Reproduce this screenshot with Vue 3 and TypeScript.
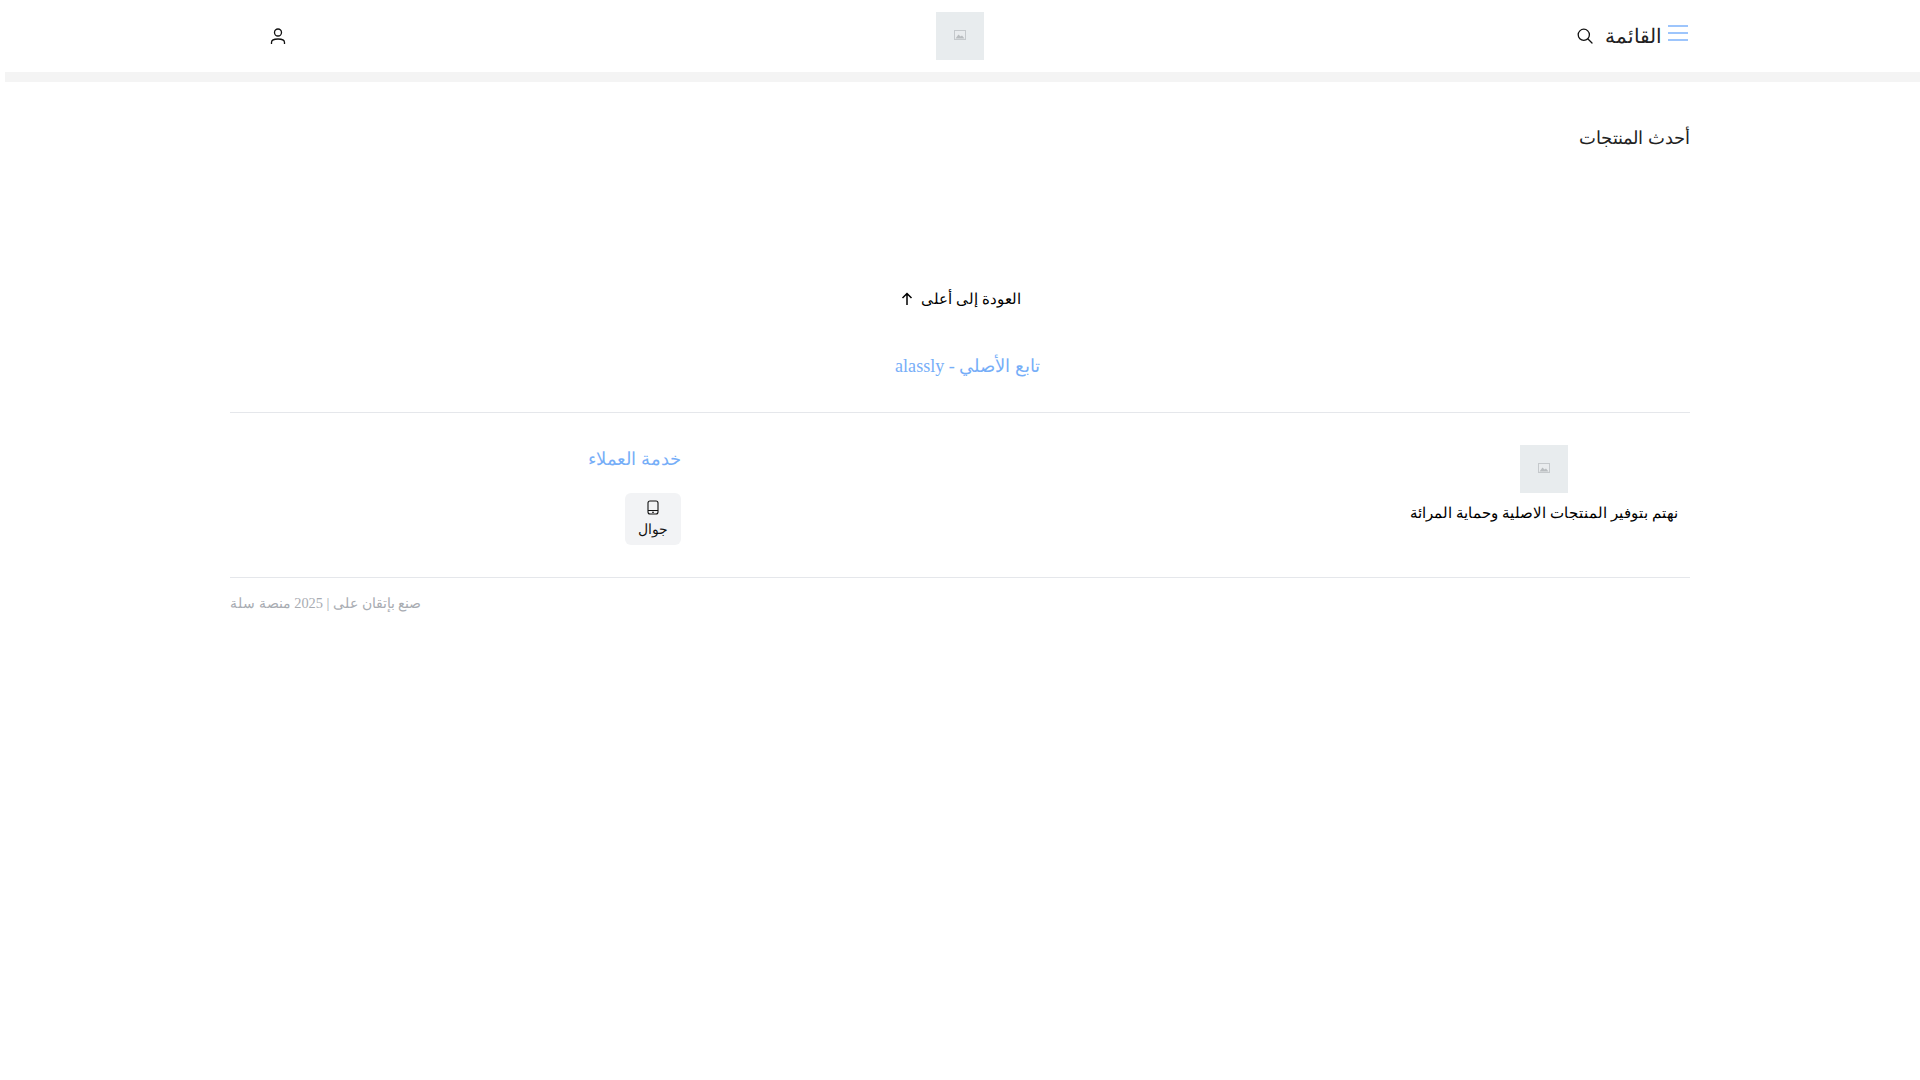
<script setup lang="ts">
const year = 2025
</script>

<template>
  <div class="page" dir="rtl" lang="ar">
    <header class="header">
      <div class="header-inner">
        <div class="header-start">
          <button class="menu-btn">
            <svg class="menu-icon" width="20" height="16" viewBox="0 0 20 16" fill="none" stroke="#7db2fb" stroke-width="1.600"><path d="M0 1h20M0 8h20M0 15h20"/></svg>
            <span class="menu-label">القائمة</span>
          </button>
          <svg class="search" width="16" height="16" viewBox="0 0 16 16" fill="none" stroke="#111" stroke-width="1.300"><circle cx="6.800" cy="6.800" r="5.600"/><path d="M11 11l4 4" stroke-linecap="round"/></svg>
        </div>
        <div class="thumb">
          <svg width="12" height="12" viewBox="0 0 12 12"><rect x="0.500" y="1.500" width="11" height="9" fill="#e9ecee" stroke="#c5c9cc"/><path d="M1.500 9.500l3-4 2 2 1.500-1 2.500 3z" fill="#b9bdc0"/></svg>
        </div>
        <div class="header-end">
          <svg width="16" height="17" viewBox="0 0 16 17" fill="none" stroke="#111" stroke-width="1.300"><circle cx="8" cy="4.500" r="3.500"/><path d="M1.500 16v-1.500c0-2.500 2-3.500 6.500-3.500s6.500 1 6.500 3.500V16"/></svg>
        </div>
      </div>
    </header>
    <div class="band"></div>
    <main class="container">
      <h2 class="latest">أحدث المنتجات</h2>
      <a class="back-top">
        <span>العودة إلى أعلى</span>
        <svg width="16" height="16" viewBox="0 0 16 16" fill="none" stroke="#000" stroke-width="1.500"><path d="M8 14V2.500M3.500 7L8 2.500 12.500 7"/></svg>
      </a>
      <p class="follow">تابع الأصلي - alassly</p>
      <footer class="footer">
        <div class="about">
          <div class="thumb">
            <svg width="12" height="12" viewBox="0 0 12 12"><rect x="0.500" y="1.500" width="11" height="9" fill="#e9ecee" stroke="#c5c9cc"/><path d="M1.500 9.500l3-4 2 2 1.500-1 2.500 3z" fill="#b9bdc0"/></svg>
          </div>
          <p class="about-text">نهتم بتوفير المنتجات الاصلية وحماية المرائة</p>
        </div>
        <div class="service">
          <h3 class="service-title">خدمة العملاء</h3>
          <div class="contact">
            <svg width="12" height="15" viewBox="0 0 12 15" fill="none" stroke="#111" stroke-width="1.100"><rect x="1" y="1" width="10" height="13" rx="2"/><path d="M1 10.500h10M5 12.300h2"/></svg>
            <span>جوال</span>
          </div>
        </div>
      </footer>
      <div class="copyright">صنع بإتقان على | {{ year }} منصة سلة</div>
    </main>
  </div>
</template>

<style scoped>
.page {
  min-height: 1080px;
  background: #fff;
  font-family: "Liberation Serif", serif;
  color: #111;
}
.header { height: 72px; display: flex; justify-content: center; }
.header-inner {
  width: 1460px;
  display: grid;
  grid-template-columns: 1fr auto 1fr;
  align-items: center;
}
.header-start { display: flex; align-items: center; gap: 12px; }
.menu-btn {
  display: flex; align-items: center; gap: 6px;
  border: 0; background: none; padding: 0 2px 0 0;
  font: inherit; color: #222;
}
.menu-icon { margin-top: -6px; }
.menu-label { font-size: 20px; }
.header-end { display: flex; justify-content: flex-end; padding-left: 40px; }
.thumb {
  width: 48px; height: 48px;
  background: #e8ecee;
  display: flex; align-items: center; justify-content: center;
  padding-bottom: 2px;
  box-sizing: border-box;
}
.band { height: 10px; background: #f4f4f4; width: 1915px; }
.container { width: 1460px; margin: 0 auto; }
.latest {
  margin: 0; padding-top: 44px;
  font-size: 18.200px; font-weight: 400; line-height: 24px; color: #222;
}
.back-top {
  display: flex; justify-content: center; align-items: center; gap: 6px;
  margin-top: 139px;
  font-size: 15.300px; line-height: 20px; color: #000;
}
.follow {
  margin: 41px 0 0;
  padding-bottom: 30px;
  border-bottom: 1px solid #e5e7eb;
  text-align: center;
  padding-left: 15px;
  font-size: 18.100px; line-height: 32px; color: #76aef8;
}
.footer {
  display: flex; justify-content: space-between; align-items: flex-start;
  padding: 32px 0;
  border-bottom: 1px solid #e5e7eb;
  height: 165px; box-sizing: border-box;
}
.about { width: 292px; display: flex; flex-direction: column; align-items: center; }
.about-text { margin: 8px 0 0; font-size: 15.300px; line-height: 24px; color: #000; white-space: nowrap; }
.service { width: 451px; display: flex; flex-direction: column; align-items: flex-start; }
.service-title { margin: 1px 0 21px; font-size: 18.200px; font-weight: 400; line-height: 26px; color: #76aef8; }
.contact {
  width: 56px; height: 52px;
  background: #f2f3f5; border-radius: 6px;
  display: flex; flex-direction: column; align-items: center; gap: 5px;
  padding-top: 7px; box-sizing: border-box;
  font-size: 14px; line-height: 20px; color: #111;
}
.copyright { text-align: left; margin-top: 13px; font-size: 14.400px; line-height: 24px; color: #a8acb2; }
</style>

<style>
html, body { margin: 0; background: #fff; }
</style>
